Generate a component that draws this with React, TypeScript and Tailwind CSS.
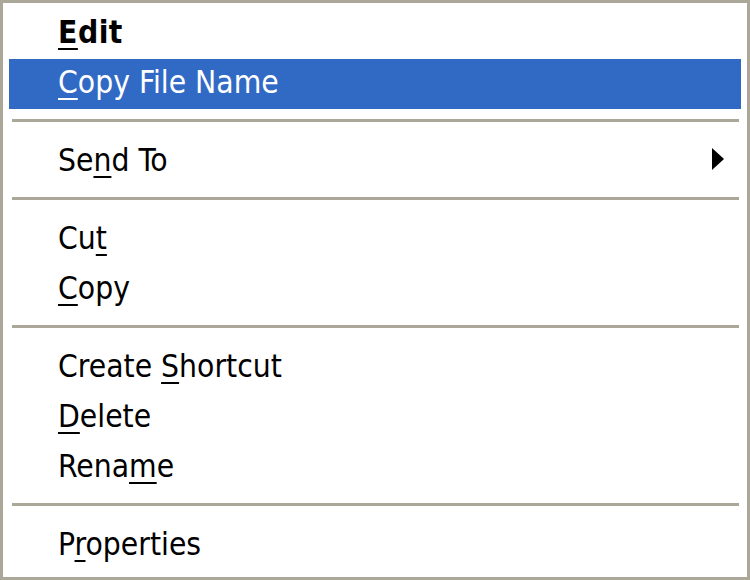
import React from "react";

type Item =
  | { kind: "sep" }
  | {
      kind: "item";
      before: string;
      key: string;
      after: string;
      bold?: boolean;
      active?: boolean;
      submenu?: boolean;
    };

const items: Item[] = [
  { kind: "item", before: "", key: "E", after: "dit", bold: true },
  { kind: "item", before: "", key: "C", after: "opy File Name", active: true },
  { kind: "sep" },
  { kind: "item", before: "Se", key: "n", after: "d To", submenu: true },
  { kind: "sep" },
  { kind: "item", before: "Cu", key: "t", after: "" },
  { kind: "item", before: "", key: "C", after: "opy" },
  { kind: "sep" },
  { kind: "item", before: "Create ", key: "S", after: "hortcut" },
  { kind: "item", before: "", key: "D", after: "elete" },
  { kind: "item", before: "Rena", key: "m", after: "e" },
  { kind: "sep" },
  { kind: "item", before: "P", key: "r", after: "operties" },
];

export default function App() {
  return (
    <div className="h-[580px] w-[750px] bg-white">
      <div
        className="flex h-full w-full flex-col border-[3px] border-[#aca899] bg-white p-[6px] text-[31.5px] text-black"
        style={{ fontFamily: '"DejaVu Sans Condensed", "DejaVu Sans", sans-serif' }}
      >
        {items.map((it, i) =>
          it.kind === "sep" ? (
            <div key={i} className="h-[28px] pt-[10px]">
              <div className="ml-[3px] mr-[2px] h-[3px] bg-[#aca899]" />
            </div>
          ) : (
            <div
              key={i}
              className={`relative flex h-[50px] items-start pl-[49px] leading-[46px] ${
                it.active ? "bg-[#316ac5] text-white" : ""
              } ${it.bold ? "font-bold tracking-[0.5px]" : ""}`}
            >
              <span>
                {it.before}
                <span className="underline decoration-2 underline-offset-[5px]">{it.key}</span>
                {it.after}
              </span>
              {it.submenu && (
                <svg
                  className="absolute right-[17px] top-[11px]"
                  width="12"
                  height="22"
                  viewBox="0 0 12 22"
                >
                  <polygon points="0,0 12,11 0,22" fill="#000" />
                </svg>
              )}
            </div>
          )
        )}
      </div>
    </div>
  );
}
